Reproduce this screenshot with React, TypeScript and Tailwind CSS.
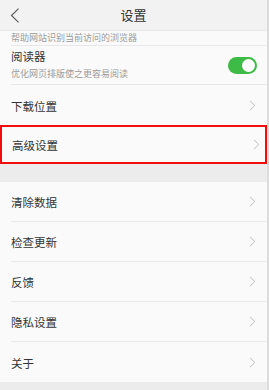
import React from "react";

const font = { fontFamily: '"Noto Sans CJK SC", "Noto Sans", sans-serif' };

function Chevron() {
  return (
    <svg width="7" height="11" viewBox="0 0 7 11" className="shrink-0">
      <path d="M1 0.8 L5.8 5.5 L1 10.2" fill="none" stroke="#bdbdbd" strokeWidth="1" />
    </svg>
  );
}

function Row({ label, last, boxed }: { label: string; last?: boolean; boxed?: boolean }) {
  return (
    <div className={boxed ? "h-[39px] shrink-0 border-2 border-[#f20d0d] flex items-center pl-[10px] pr-[5px]" : "h-[40px] shrink-0 pl-[11px] flex"}>
      <div className={"flex-1 flex items-center pr-[11px] " + (last || boxed ? "" : "border-b border-[#e8e8e8]")}>
        <span className="flex-1 text-[11.5px] text-[#333] leading-none pt-[3px]">{label}</span>
        {!boxed && <Chevron />}
      </div>
      {boxed && <Chevron />}
    </div>
  );
}

export default function App() {
  return (
    <div className="w-[269px] h-[390px] overflow-hidden flex bg-[#ececec]" style={font}>
      <div className="flex-1 flex flex-col bg-[#fafafa]">
        <div className="h-[31px] shrink-0 bg-[#f2f2f2] border-b border-[#e6e6e6] flex items-center relative">
          <svg width="10" height="15" viewBox="0 0 10 15" className="ml-[10px]">
            <path d="M8.5 0.7 L1.5 7.5 L8.5 14.3" fill="none" stroke="#555" strokeWidth="1.1" />
          </svg>
          <span className="absolute left-0 right-0 text-center text-[13px] text-[#333]">设置</span>
        </div>
        <div className="pl-[11px] shrink-0">
          <div className="h-[15px] border-b border-[#e8e8e8] flex items-start">
            <span className="text-[9px] text-[#9a9a9a] leading-none mt-[2px]">帮助网站识别当前访问的浏览器</span>
          </div>
        </div>
        <div className="pl-[11px] shrink-0">
          <div className="h-[39px] border-b border-[#e8e8e8] flex items-center pr-[10px]">
            <div className="flex-1 flex flex-col gap-[6px] pb-[1px]">
              <span className="text-[11.5px] text-[#333] leading-none">阅读器</span>
              <span className="text-[9px] text-[#9a9a9a] leading-none">优化网页排版使之更容易阅读</span>
            </div>
            <div className="w-[29px] h-[17px] rounded-full bg-[#3dbb46] flex items-center justify-end pr-[2px]">
              <div className="w-[13px] h-[13px] rounded-full bg-white" />
            </div>
          </div>
        </div>
        <Row label="下载位置" last />
        <Row label="高级设置" boxed />
        <div className="h-[18px] bg-[#ececec] shrink-0" />
        <Row label="清除数据" />
        <Row label="检查更新" />
        <Row label="反馈" />
        <Row label="隐私设置" />
        <Row label="关于" last />
        <div className="flex-1 bg-[#ececec]" />
      </div>
      <div className="w-[2px] bg-[#dcdcdc]" />
    </div>
  );
}
